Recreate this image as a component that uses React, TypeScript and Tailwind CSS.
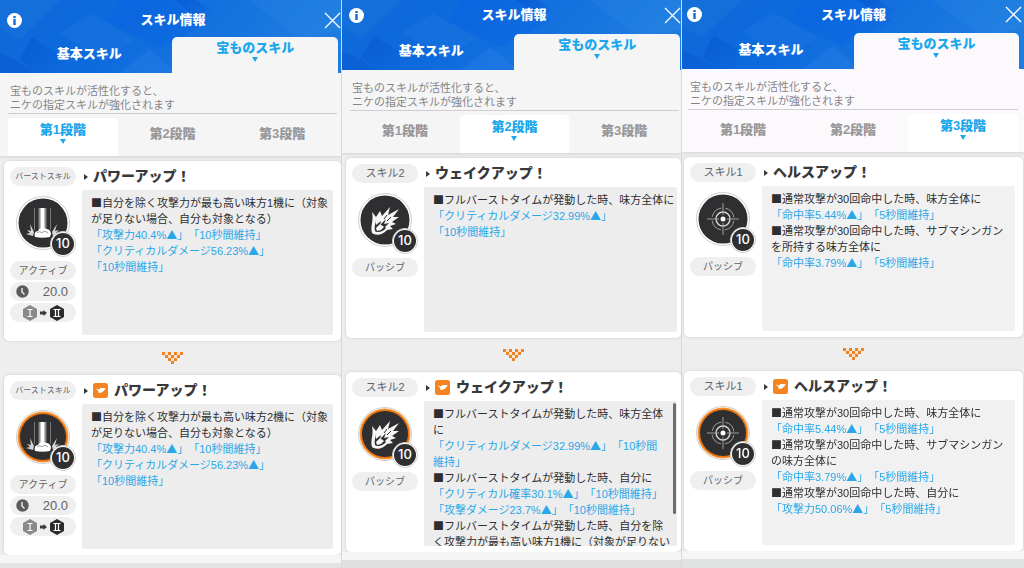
import React from 'react';
import clsx from 'clsx';

type IconKind = 'burst' | 'flame' | 'scope';

interface Line {
  text: string;
  blue?: boolean;
}

interface SkillCardData {
  label: string;
  small?: boolean;
  name: string;
  icon: IconKind;
  kind: string;
  upgraded?: boolean;
  cooldown?: string;
  lines: Line[];
  scroll?: boolean;
}

interface PanelData {
  id: string;
  stage: number;
  titleBar: string;
  tabRow: string;
  info: string;
  list: string;
  cardPad: string;
  body: string;
  box: string;
  footer: string;
  cards: SkillCardData[];
}

const STAGES = ['第1段階', '第2段階', '第3段階'];

const burst = (count: number, upgraded: boolean): SkillCardData => ({
  label: 'バーストスキル',
  small: true,
  name: 'パワーアップ！',
  icon: 'burst',
  kind: 'アクティブ',
  cooldown: '20.0',
  upgraded,
  lines: [
    { text: `■自分を除く攻撃力が最も高い味方${count}機に（対象` },
    { text: 'が足りない場合、自分も対象となる）' },
    { text: '「攻撃力40.4%▲」「10秒間維持」', blue: true },
    { text: '「クリティカルダメージ56.23%▲」', blue: true },
    { text: '「10秒間維持」', blue: true },
  ],
});

const PANELS: PanelData[] = [
  {
    id: 'stage1',
    stage: 0,
    titleBar: 'h-[37px] pl-[7px] pt-[3px]',
    tabRow: 'pr-[3px]',
    info: 'pl-[8px] pr-[4px]',
    list: 'pl-[4px]',
    cardPad: 'pr-[8px]',
    body: 'bg-[#f5f5f5]',
    box: 'bg-[#ededed]',
    footer: 'bg-[#e3e3e3]',
    cards: [burst(1, false), burst(2, true)],
  },
  {
    id: 'stage2',
    stage: 1,
    titleBar: 'h-[34px] pl-[7px] pb-[4px]',
    tabRow: 'pr-[1px]',
    info: 'pl-[8px] pr-[2px]',
    list: 'pl-[4px]',
    cardPad: 'pr-[4px]',
    body: 'bg-[#f5f5f5]',
    box: 'bg-[#ededed]',
    footer: 'bg-[#e0e0e0]',
    cards: [
      {
        label: 'スキル2',
        name: 'ウェイクアップ！',
        icon: 'flame',
        kind: 'パッシブ',
        lines: [
          { text: '■フルバーストタイムが発動した時、味方全体に' },
          { text: '「クリティカルダメージ32.99%▲」', blue: true },
          { text: '「10秒間維持」', blue: true },
        ],
      },
      {
        label: 'スキル2',
        name: 'ウェイクアップ！',
        icon: 'flame',
        kind: 'パッシブ',
        upgraded: true,
        scroll: true,
        lines: [
          { text: '■フルバーストタイムが発動した時、味方全体' },
          { text: 'に' },
          { text: '「クリティカルダメージ32.99%▲」「10秒間', blue: true },
          { text: '維持」', blue: true },
          { text: '■フルバーストタイムが発動した時、自分に' },
          { text: '「クリティカル確率30.1%▲」「10秒間維持」', blue: true },
          { text: '「攻撃ダメージ23.7%▲」「10秒間維持」', blue: true },
          { text: '■フルバーストタイムが発動した時、自分を除' },
          { text: 'く攻撃力が最も高い味方1機に（対象が足りない' },
        ],
      },
    ],
  },
  {
    id: 'stage3',
    stage: 2,
    titleBar: 'h-[33px] pl-[5px] pr-[2px] pb-[4px]',
    tabRow: 'pr-[5px]',
    info: 'pl-[6px] pr-[6px]',
    list: 'pl-[2px] pr-[1px]',
    cardPad: 'pr-[8px]',
    body: 'bg-[#fcf9fd]',
    box: 'bg-[#f1f1f2]',
    footer: 'bg-[#dfe3e1]',
    cards: [
      {
        label: 'スキル1',
        name: 'ヘルスアップ！',
        icon: 'scope',
        kind: 'パッシブ',
        lines: [
          { text: '■通常攻撃が30回命中した時、味方全体に' },
          { text: '「命中率5.44%▲」「5秒間維持」', blue: true },
          { text: '■通常攻撃が30回命中した時、サブマシンガン' },
          { text: 'を所持する味方全体に' },
          { text: '「命中率3.79%▲」「5秒間維持」', blue: true },
        ],
      },
      {
        label: 'スキル1',
        name: 'ヘルスアップ！',
        icon: 'scope',
        kind: 'パッシブ',
        upgraded: true,
        lines: [
          { text: '■通常攻撃が30回命中した時、味方全体に' },
          { text: '「命中率5.44%▲」「5秒間維持」', blue: true },
          { text: '■通常攻撃が30回命中した時、サブマシンガン' },
          { text: 'の味方全体に' },
          { text: '「命中率3.79%▲」「5秒間維持」', blue: true },
          { text: '■通常攻撃が30回命中した時、自分に' },
          { text: '「攻撃力50.06%▲」「5秒間維持」', blue: true },
        ],
      },
    ],
  },
];

const HeaderPattern = () => (
  <svg
    className="absolute inset-0 h-full w-full"
    viewBox="0 0 342 74"
    preserveAspectRatio="none"
    aria-hidden="true"
  >
    <defs>
      <linearGradient id="sky" x1="0" y1="0" x2="1" y2="0.2">
        <stop offset="0" stopColor="#0f6ad9" />
        <stop offset="0.4" stopColor="#0d6ade" />
        <stop offset="1" stopColor="#1e7ce0" />
      </linearGradient>
      <linearGradient id="fold" x1="0" y1="0" x2="1" y2="1">
        <stop offset="0" stopColor="#0452cf" />
        <stop offset="1" stopColor="#0452cf" stopOpacity="0" />
      </linearGradient>
    </defs>
    <rect width="342" height="74" fill="url(#sky)" />
    <path d="M0 0H60L20 40L0 28Z" fill="#2277dd" opacity="0.35" />
    <path d="M32 38L66 60L54 74H34L20 60Z" fill="url(#fold)" opacity="0.6" />
    <path d="M120 0H176L210 22L160 50L108 22Z" fill="#0a62e2" opacity="0.35" />
    <path d="M176 0H196L214 12L200 20Z" fill="url(#fold)" opacity="0.6" />
    <path d="M60 34L92 14L136 40L104 62Z" fill="#2a7ee4" opacity="0.25" />
    <path d="M250 0H342V30L300 40Z" fill="#3090e6" opacity="0.2" />
    <path d="M0 54L18 62L34 74H0Z" fill="#0858cf" opacity="0.5" />
    <path d="M120 74L150 50L178 74Z" fill="#2a80e6" opacity="0.4" />
  </svg>
);

const SkillIcon = ({ kind, upgraded }: { kind: IconKind; upgraded?: boolean }) => (
  <svg width="54" height="54" viewBox="0 0 54 54" aria-hidden="true">
    <circle cx="27" cy="27" r="26.5" fill="#fff" stroke="#cfcfcf" />
    {upgraded && <circle cx="27" cy="27" r="25.5" fill="#f7a048" />}
    {upgraded && <circle cx="27" cy="27" r="24.5" fill="#ee7410" />}
    <circle cx="27" cy="27" r={upgraded ? 23 : 24.5} fill="#2f2f31" />
    {kind === 'burst' && (
      <g>
        <path d="M22.500 12h8v22h-8z" fill="#8a8a8a" />
        <path d="M24.500 12h4v22h-4z" fill="#fff" />
        <path d="M18.500 12v22M34.500 12v22" stroke="#8c8c8c" strokeWidth="0.8" />
        <path
          d="M19 41c-1-3 0-6 3-6 1-3 6-4 8-2 3 0 5 2 5 5l-1 3c-5 1-10 1-15 0Z"
          fill="#fff"
        />
        <path d="M21 37c2-2 4-1 5 0 1-2 4-2 6 0" stroke="#777" strokeWidth="0.8" fill="none" />
        <path
          d="M17 40L10 38l4-1-3-3 4 1-1-7 4 8ZM37 40l7-2-4-1 3-3-4 1 2-7-5 8Z"
          fill="#d5d5d5"
        />
      </g>
    )}
    {kind === 'flame' && (
      <g>
        <path
          d="M14 19L18 24L22 18L24 23L32 14L30 22L41 16L35 24L41 24L34 29L38 31L32 33L35 36L29 37C25 42 18 43 14 40C12 33 16 28 14 19Z"
          fill="#f6f6f6"
        />
        <path
          d="M17 26L18 32L23 28L22 32L28 26L26 31L31 30L27 34L28 35C25 39 19 40 17 38C16 33 18 31 17 26Z"
          fill="#2f2f31"
        />
        <path d="M18 35L22 31L26 34L23 37L19 38Z" fill="#f6f6f6" />
        <path d="M29 22L26 26M33 24L29 28" stroke="#2f2f31" />
      </g>
    )}
    {kind === 'scope' && (
      <g fill="none" stroke="#a0a0a0">
        <circle cx="27" cy="27" r="11" strokeWidth="1" strokeDasharray="13.300 4" strokeDashoffset="-2" />
        <circle cx="27" cy="27" r="7" stroke="#d8d8d8" strokeWidth="1.400" />
        <path d="M27 11v12M27 31v12M11 27h12M31 27h12" strokeWidth="1" />
        <circle cx="27" cy="27" r="2.500" fill="#fff" stroke="none" />
      </g>
    )}
  </svg>
);

const Hexagon = ({ two }: { two?: boolean }) => (
  <svg width="14" height="16" viewBox="0 0 14 16" aria-hidden="true">
    <path d="M7 0L14 4V12L7 16L0 12V4Z" fill={two ? '#2b2b2d' : '#8a888b'} />
    <path
      d={two ? 'M3.500 4.500h7M3.500 11.500h7M5.500 4.500v7M8.500 4.500v7' : 'M4.500 4.500h5M4.500 11.500h5M7 4.500v7'}
      stroke="#fff"
      strokeWidth="1.200"
    />
  </svg>
);

const Pill = ({ children, className }: { children: React.ReactNode; className?: string }) => (
  <div
    className={clsx(
      'flex h-[19px] w-full items-center whitespace-nowrap rounded-full bg-[#efeff0] text-[#626264]',
      className
    )}
  >
    {children}
  </div>
);

// Checkered orange chevron between the two cards
const CHEVRON = [[0, 2, 4, 6], [1, 3, 5], [2, 4], [3]];

const Chevron = () => (
  <svg width="21" height="12" viewBox="0 0 21 12" className="mx-auto" aria-hidden="true">
    <path d="M3 0h3v3H3zM15 0h3v3h-3zM6 3h3v3H6zM12 3h3v3h-3zM9 6h3v3H9z" fill="#fae3cd" />
    {CHEVRON.map((cols, row) =>
      cols.map((col) => (
        <rect key={`${row}-${col}`} x={col * 3} y={row * 3} width="3" height="3" fill="#ec8425" />
      ))
    )}
  </svg>
);

const SkillCard = ({ card, box, pad }: { card: SkillCardData; box: string; pad: string }) => (
  <article
    className={clsx(
      'flex h-[180px] gap-[6px] rounded-[5px] bg-white pl-[6px] shadow-[0_0_3px_rgba(0,0,0,0.16)]',
      pad
    )}
  >
    <div className="flex w-[66px] shrink-0 flex-col gap-[2px] pt-[6px]">
      <Pill className={clsx('justify-center', card.small ? 'text-[8px]' : 'text-[11px]')}>
        {card.label}
      </Pill>
      <div className="relative mb-[9px] mt-[8px] h-[54px] pl-[6px]">
        <SkillIcon kind={card.icon} upgraded={card.upgraded} />
        <span className="absolute -bottom-[7px] right-0 flex h-[26px] w-[26px] items-center justify-center rounded-full border border-[#cccccc] bg-white">
          <span className="flex h-[22px] w-[22px] items-center justify-center rounded-full bg-[#2f2f31] font-['Inter',sans-serif] text-[13px] font-medium text-white">
            10
          </span>
        </span>
      </div>
      <Pill className="justify-center text-[10px]">{card.kind}</Pill>
      {card.cooldown && (
        <>
          <Pill className="justify-between pl-[6px] pr-[8px] text-[13px]">
            <svg width="13" height="13" viewBox="0 0 13 13" aria-hidden="true">
              <circle cx="6.500" cy="6.500" r="6.200" fill="#5b5c5b" />
              <path d="M6 3v4l2.500 2.500" stroke="#eee" strokeWidth="1.400" fill="none" />
            </svg>
            <span>{card.cooldown}</span>
          </Pill>
          <Pill className="justify-center gap-[3px]">
            <Hexagon />
            <svg width="7" height="6" viewBox="0 0 7 6" aria-hidden="true">
              <path d="M0 1.500h3.500V0L7 3L3.500 6V4.500H0Z" fill="#3a3a3c" />
            </svg>
            <Hexagon two />
          </Pill>
        </>
      )}
    </div>

    <div className="min-w-0 flex-1 pb-[6px]">
      <h3 className="flex h-[29px] items-center whitespace-nowrap pl-[2px] pt-[2px] text-[14px] font-black text-[#39393b]">
        <svg width="4" height="6" viewBox="0 0 4 6" className="mr-[5px]" aria-hidden="true">
          <path d="M0 0L4 3L0 6Z" fill="#39393b" />
        </svg>
        {card.upgraded && (
          <svg width="15" height="15" viewBox="0 0 15 15" className="mr-[6px]" aria-hidden="true">
            <rect width="15" height="15" rx="2.500" fill="#f5831f" />
            <path d="M2.500 5.500L6 6.500L7.500 5H12.500L12 6.500L9.500 9L7 10L5 9.500L5.500 8Z" fill="#fff" />
          </svg>
        )}
        {card.name}
      </h3>
      <div className="relative">
        <div
          className={clsx(
            'h-[145px] overflow-y-auto rounded-[2px] pl-[9px] pt-[5px] text-[11px] leading-[16px] [scrollbar-width:none]',
            box
          )}
        >
          {card.lines.map((line, i) => (
            <p
              key={i}
              className={clsx(
                'whitespace-nowrap [text-spacing-trim:space-all]',
                line.blue ? 'text-[#2aa7e8]' : 'text-[#2e2e30]'
              )}
            >
              {line.text.split(/([■▲])/).map((part, j) =>
                part === '■' || part === '▲' ? (
                  <span key={j} className="font-['Noto_Sans_CJK_JP',sans-serif] leading-none">
                    {part}
                  </span>
                ) : (
                  part
                )
              )}
            </p>
          ))}
        </div>
        {card.scroll && (
          <div className="absolute right-[1px] top-[2px] h-[111px] w-[3px] rounded-full bg-[#6c6c6c]" />
        )}
      </div>
    </div>
  </article>
);

const Caret = () => (
  <svg width="6" height="5" viewBox="0 0 6 5" aria-hidden="true">
    <path d="M0 0H6L3 5Z" fill="currentColor" />
  </svg>
);

const Panel = ({ panel }: { panel: PanelData }) => (
  <section className="flex min-w-0 flex-col overflow-hidden border-r border-[#d9d7dc] bg-[#eeeeee] last:border-r-0">
    <header className="relative bg-[#0f6bdc] text-white">
      <HeaderPattern />
      <div className={clsx('relative flex items-center justify-between', panel.titleBar)}>
        <button type="button" aria-label="情報" className="flex">
          <svg width="15" height="15" viewBox="0 0 15 15">
            <circle cx="7.500" cy="7.500" r="7.500" fill="#fff" />
            <path d="M6.300 3h2.400v2H6.300zM6.300 6h2.400v6H6.300z" fill="#1569d6" />
          </svg>
        </button>
        <h2 className="text-[13px] font-black">スキル情報</h2>
        <button type="button" aria-label="閉じる" className="flex">
          <svg width="17" height="17" viewBox="0 0 17 17">
            <path d="M1 1L16 16M16 1L1 16" stroke="#fff" strokeWidth="1.300" />
          </svg>
        </button>
      </div>
      <div className={clsx('relative grid h-[36px] grid-cols-[173fr_166fr]', panel.tabRow)}>
        <button type="button" className="pb-[3px] pl-[6px] text-[13px] font-black">
          基本スキル
        </button>
        <button
          type="button"
          className={clsx(
            'flex flex-col items-center rounded-t-[5px] pt-[2px] text-[13px] font-black leading-[18px] text-[#1ba7ec]',
            panel.body
          )}
        >
          宝ものスキル
          <Caret />
        </button>
      </div>
    </header>

    <div className={clsx('shadow-[0_1px_3px_rgba(0,0,0,0.12)]', panel.info, panel.body)}>
      <p className="border-b border-[#cfcdd0] pb-[1px] pl-[2px] pt-[11px] text-[11px] leading-[14px] text-[#858587]">
        宝ものスキルが活性化すると、
        <br />
        ニケの指定スキルが強化されます
      </p>
      <div className="grid h-[42px] grid-cols-3 pt-[4px]">
        {STAGES.map((stage, i) => (
          <button
            key={stage}
            type="button"
            className={clsx(
              'flex flex-col items-center rounded-t-[4px] text-[13px] font-black leading-[18px]',
              i === panel.stage ? 'bg-white pt-[3px] text-[#1ba7ec]' : 'pt-[7px] text-[#98989a]'
            )}
          >
            {stage}
            {i === panel.stage && <Caret />}
          </button>
        ))}
      </div>
    </div>

    <div className={clsx('pt-[5px]', panel.list)}>
      <SkillCard card={panel.cards[0]} box={panel.box} pad={panel.cardPad} />
      <div className="flex h-[34px] items-center">
        <Chevron />
      </div>
      <SkillCard card={panel.cards[1]} box={panel.box} pad={panel.cardPad} />
    </div>
    <div className="h-2 bg-[#f5f5f5]" />
    <div className={clsx('flex-1', panel.footer)} />
  </section>
);

const App: React.FC = () => {
  return (
    <main className="grid min-h-screen grid-cols-[342fr_340fr_342fr] font-['Liberation_Sans','Noto_Sans_CJK_JP',sans-serif]">
      {PANELS.map((panel) => (
        <Panel key={panel.id} panel={panel} />
      ))}
    </main>
  );
};

export default App;
